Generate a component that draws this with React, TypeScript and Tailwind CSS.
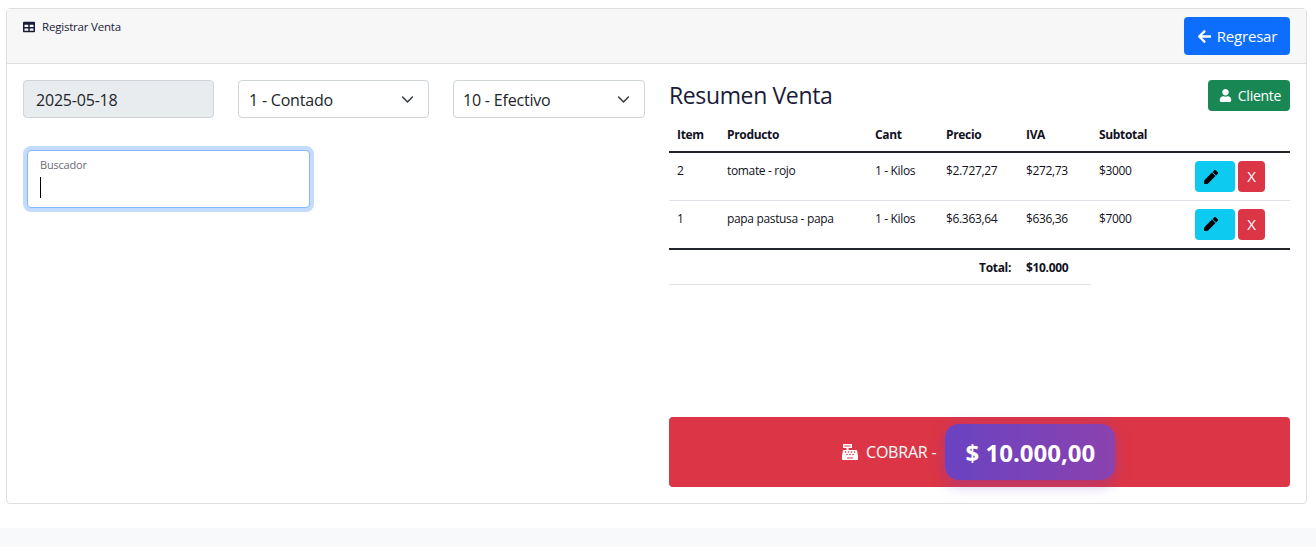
import React from 'react';
import { FaTable, FaArrowLeft, FaUser, FaPen, FaCashRegister } from 'react-icons/fa';

const rows = [
  { item: '2', producto: 'tomate - rojo', cant: '1 - Kilos', precio: '$2.727,27', iva: '$272,73', subtotal: '$3000' },
  { item: '1', producto: 'papa pastusa - papa', cant: '1 - Kilos', precio: '$6.363,64', iva: '$636,36', subtotal: '$7000' },
];

function Chevron() {
  return (
    <svg viewBox="0 0 16 16" className="h-[13px] w-[13px]" fill="none" stroke="#343a40" strokeWidth="1.9" strokeLinecap="round" strokeLinejoin="round">
      <path d="m2 5 6 6 6-6" />
    </svg>
  );
}

function SelectBox({ label, className }: { label: string; className: string }) {
  return (
    <div className={`flex h-[38px] items-center justify-between rounded border border-[#ced4da] bg-white pr-[14px] text-[16px] tracking-[-0.2px] text-[#212529] ${className}`}>
      <span className="pt-px">{label}</span>
      <Chevron />
    </div>
  );
}

export default function App() {
  return (
    <div className="h-[547px] w-[1316px] overflow-hidden bg-white font-['Open_Sans','Noto_Sans',sans-serif] text-[#212529]">
      <div className="h-[528px] px-[6px] pt-[8px]">
        {/* Card */}
        <div className="flex h-[496px] w-[1301px] flex-col rounded border border-[#dfdfdf]">
          <div className="flex h-[55px] items-start justify-between border-b border-[#dfdfdf] bg-[#f7f7f7] pl-[16px] pr-[16px] pt-[8px]">
            <div className="flex items-center gap-[7px] pt-[1px] text-[11.5px] tracking-[-0.2px] text-[#1a1a3a]">
              <FaTable className="h-[12px] w-[12px]" />
              <span>Registrar Venta</span>
            </div>
            <button className="flex h-[38px] w-[106px] items-center justify-center gap-[5px] rounded bg-[#0d6efd] text-[15px] tracking-[-0.2px] text-white">
              <FaArrowLeft className="h-[15px] w-[15px]" />
              Regresar
            </button>
          </div>

          <div className="flex flex-1 pl-[16px] pr-[16px] pt-[16px]">
            {/* Left column */}
            <div className="w-[622px]">
              <div className="flex gap-[24px]">
                <div className="flex h-[38px] w-[191px] items-center rounded border border-[#ced4da] bg-[#e9ecef] pl-[12px] pt-px text-[16px] tracking-[-0.2px]">
                  2025-05-18
                </div>
                <SelectBox label="1 - Contado" className="w-[191px] pl-[10px]" />
                <SelectBox label="10 - Efectivo" className="w-[192px] pl-[9px]" />
              </div>
              <div className="ml-[4px] mt-[32px] flex h-[58px] w-[283px] flex-col rounded border border-[#86b7fe] bg-white pl-[12px] pt-[7px] shadow-[0_0_0_4px_#c2dbfe]">
                <span className="text-[11px] leading-[14px] tracking-[-0.2px] text-[#6c6c74]">Buscador</span>
                <span className="mt-[5px] h-[21px] w-px bg-black" />
              </div>
            </div>

            {/* Right column */}
            <div className="ml-[24px] flex h-[407px] w-[621px] flex-col">
              <div className="flex h-[38px] items-start justify-between">
                <h2 className="text-[23px] leading-[30px] tracking-[-0.37px] text-[#1a1a3a]">Resumen Venta</h2>
                <button className="flex h-[31px] w-[82px] items-center justify-center gap-[6px] rounded bg-[#198754] pl-[2px] text-[14px] tracking-[-0.25px] text-white">
                  <FaUser className="h-[13px] w-[13px]" />
                  Cliente
                </button>
              </div>

              <table className="w-[621px] table-fixed border-collapse text-[12px] tracking-[-0.34px] text-[#111122]">
                <colgroup>
                  <col className="w-[50px]" />
                  <col className="w-[148px]" />
                  <col className="w-[71px]" />
                  <col className="w-[80px]" />
                  <col className="w-[73px]" />
                  <col className="w-[96px]" />
                  <col className="w-[103px]" />
                </colgroup>
                <thead>
                  <tr className="h-[34px] border-b-2 border-[#212529] text-left font-bold">
                    <th className="pl-[8px]">Item</th>
                    <th className="pl-[8px]">Producto</th>
                    <th className="pl-[8px]">Cant</th>
                    <th className="pl-[8px]">Precio</th>
                    <th className="pl-[8px]">IVA</th>
                    <th className="pl-[8px]">Subtotal</th>
                    <th />
                  </tr>
                </thead>
                <tbody>
                  {rows.map((r, i) => (
                    <tr key={r.item} className={`align-top ${i === 0 ? 'h-[48px] border-b border-[#dee2e6]' : 'h-[49px] border-b-2 border-[#212529]'}`}>
                      <td className="pl-[8px] pt-[9px]">{r.item}</td>
                      <td className="pl-[8px] pt-[9px]">{r.producto}</td>
                      <td className="pl-[8px] pt-[9px]">{r.cant}</td>
                      <td className="pl-[8px] pt-[9px]">{r.precio}</td>
                      <td className="pl-[8px] pt-[9px]">{r.iva}</td>
                      <td className="pl-[8px] pt-[9px]">{r.subtotal}</td>
                      <td className="pl-[8px] pt-[8px]">
                        <div className="flex gap-[3px]">
                          <button className="flex h-[31px] w-[40px] items-center justify-center rounded bg-[#0dcaf0] pr-[8px] text-black">
                            <FaPen className="h-[14px] w-[14px]" />
                          </button>
                          <button className="flex h-[31px] w-[27px] items-center justify-center rounded bg-[#dc3545] text-[15px] text-white">X</button>
                        </div>
                      </td>
                    </tr>
                  ))}
                </tbody>
                <tfoot>
                  <tr className="h-[35px] font-bold">
                    <td colSpan={4} className="border-b border-[#dee2e6] pr-[7px] pt-[2px] text-right">Total:</td>
                    <td className="border-b border-[#dee2e6] pl-[8px] pt-[2px]">$10.000</td>
                    <td colSpan={2} />
                  </tr>
                </tfoot>
              </table>

              {/* Cobrar */}
              <button className="mt-auto flex h-[70px] w-[621px] items-center rounded bg-[#dc3545] pl-[173px] text-white">
                <FaCashRegister className="h-[16px] w-[16px]" />
                <span className="ml-[8px] text-[16px] tracking-[-0.2px]">COBRAR -</span>
                <span className="ml-[9px] flex h-[56px] w-[170px] items-center justify-center rounded-[14px] bg-linear-to-r from-[#6a42c2] to-[#8a42ae] pt-px text-[24px] font-bold shadow-[0_4px_15px_rgba(111,66,193,0.4)]">
                  $ 10.000,00
                </span>
              </button>
            </div>
          </div>
        </div>
      </div>
      <div className="h-[19px] bg-[#f8f9fa]" />
    </div>
  );
}
